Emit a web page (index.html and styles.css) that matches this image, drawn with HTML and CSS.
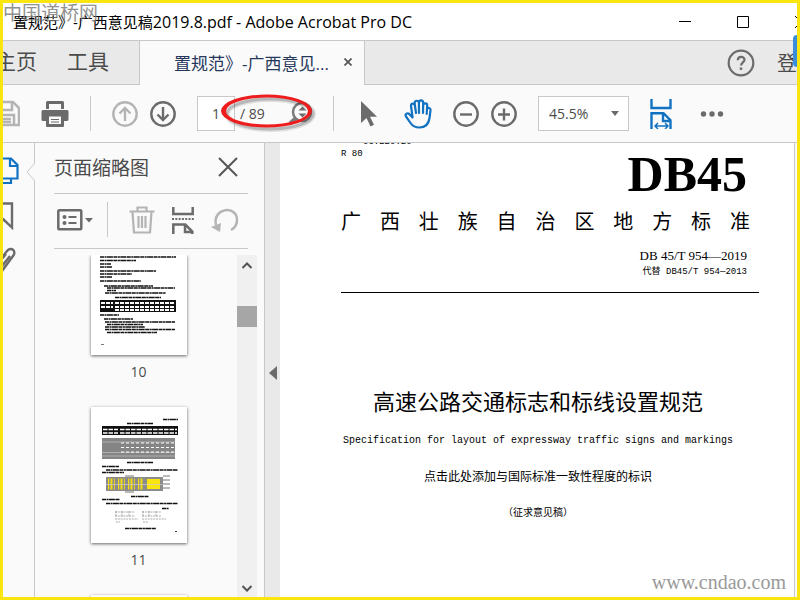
FILE: index.html
```
<!DOCTYPE html>
<html lang="zh-CN">
<head>
  <meta charset="UTF-8" />
  <meta name="viewport" content="width=device-width, initial-scale=1" />
  <title>Adobe Acrobat Pro DC</title>
  <link rel="stylesheet" href="styles.css">
</head>
<body>

  <header class="titlebar">
    <h1>置规范》-广西意见稿<span>2019.8.pdf - Adobe Acrobat Pro DC</span></h1>
    <div class="window-buttons">
      <button aria-label="Minimize"><svg width="12" height="12"><path d="M0 5.5h12" stroke="#000"/></svg></button>
      <button aria-label="Maximize"><svg width="12" height="12"><path d="M.5 .5h11v11h-11z" fill="none" stroke="#000"/></svg></button>
      <button aria-label="Close"><svg width="12" height="12"><path d="M0 0l12 12M12 0L0 12" stroke="#000"/></svg></button>
    </div>
  </header>
  <div class="site-mark">中国道桥网</div>

  <nav class="tabs">
    <div class="main-tabs">
      <a href="#home">主页</a>
      <a href="#tools">工具</a>
    </div>
    <div class="file-tab">
      <span>置规范》-广西意见...</span>
      <button aria-label="Close tab"><svg width="8" height="8"><path d="M.5 .5l7 7M7.500 .5l-7 7" stroke="#555" stroke-width="1.700"/></svg></button>
    </div>
    <div class="account">
      <button aria-label="Help">
        <svg width="28" height="28" fill="none" stroke="#6b6b6b" stroke-width="2.200"><circle cx="14" cy="14" r="12.300"/><path d="M10.800 11.200c0-4.400 6.700-4.200 6.700-.5 0 2.600-3.400 2.700-3.400 5.700" stroke-width="2.200"/><path d="M14 18.500v2.400" stroke-width="2.500"/></svg>
      </button>
      <a href="#login">登录</a>
    </div>
    <div class="side-flag"></div>
  </nav>

  <div class="toolbar">
    <div class="group file-tools">
      <button aria-label="Save">
        <svg width="28" height="28" fill="none" stroke="#b4b4b4" stroke-width="2.500"><path d="M2 2h19l6 6v17H2z"/><path d="M8 2v8h12V2M7 25V15h15v10M10 19h9M10 22h9"/></svg>
      </button>
      <button aria-label="Print">
        <svg width="28" height="28"><path d="M5 9V2.500Q5 1 6.500 1h15Q23 1 23 2.500V9h-3V4H8v5z" fill="#6b6b6b"/><path d="M2 10h24q1.500 0 1.500 1.500V19Q27.500 21 26 21h-3v5q0 1-1 1H6q-1 0-1-1v-5H2Q.5 21 .5 19.500v-8Q.5 10 2 10z" fill="#6b6b6b"/><path d="M8 16.500h12V24H8z" fill="#fafafa"/><path d="M10 19.500h8M10 22h8" stroke="#6b6b6b" stroke-width="1.200"/></svg>
      </button>
    </div>
    <div class="divider"></div>
    <div class="group">
      <button aria-label="Previous page">
        <svg width="26" height="26" fill="none" stroke="#b4b4b4" stroke-width="2.400"><circle cx="13" cy="13" r="11.700"/><path d="M13 20V7M7.500 12.500L13 7l5.500 5.500"/></svg>
      </button>
      <button aria-label="Next page">
        <svg width="26" height="26" fill="none" stroke="#6b6b6b" stroke-width="2.400"><circle cx="13" cy="13" r="11.700"/><path d="M13 6v13M7.500 13.500L13 19l5.500-5.500"/></svg>
      </button>
    </div>
    <div class="page-nav">
      <input type="text" id="page" value="1">
      <label for="page">/ 89</label>
      <button aria-label="Find">
        <svg width="24" height="28"><circle cx="14" cy="12" r="9" fill="none" stroke="#7b7b7b" stroke-width="2.500"/><path d="M8 18L2 23.500" stroke="#7b7b7b" stroke-width="4"/><path d="M10.500 10.500l4-4 4 4zM10.500 13.500l4 4 4-4z" fill="#6b6b6b"/></svg>
      </button>
      <svg class="red-ring" width="100" height="42">
        <ellipse cx="50" cy="22" rx="43" ry="15" fill="none" stroke="#000" stroke-opacity=".1" stroke-width="6"/>
        <ellipse cx="50" cy="22" rx="43" ry="15" fill="none" stroke="#000" stroke-opacity=".18" stroke-width="3"/>
        <path fill-rule="evenodd" d="M1 19a45.500 16.500 0 1 0 91 0a45.500 16.500 0 1 0-91 0zM6 19a41 13.500 0 1 0 82 0a41 13.500 0 1 0-82 0z" fill="#ee1c1c"/>
      </svg>
    </div>
    <div class="divider"></div>
    <div class="group wide">
      <button aria-label="Select">
        <svg width="28" height="28"><path d="M6 1v22l5.500-5 4 8.500 3.500-1.800-4-8H22z" fill="#6b6b6b"/></svg>
      </button>
      <button aria-label="Hand">
        <svg width="28" height="30" fill="none" stroke="#1272c2" stroke-width="2.200" stroke-linejoin="round" stroke-linecap="round"><path d="M8.500 18L7 7c-.3-3 3.500-3.500 4 0l1 7M11 7.500l-.3-3.500c0-3 4-3 4.200 0L15 14M14.900 4c0-3.500 4.300-3.500 4.300 0L19 14M19.200 6.500c.2-3 4.100-2.600 4 0L22.700 15M23 10.500c.8-2.500 3.800-1.800 3.500.8L25.500 19c-.8 6-4.500 9.500-10 9.500-4.500 0-7-1.500-9-4.500L2 17.500c-1.500-2.800 1.700-4.200 3.500-2.200l3 3.200"/></svg>
      </button>
    </div>
    <div class="group">
      <button aria-label="Zoom out">
        <svg width="26" height="26" fill="none" stroke="#6b6b6b" stroke-width="2.400"><circle cx="13" cy="13" r="11.700"/><path d="M7 13.500h12"/></svg>
      </button>
      <button aria-label="Zoom in">
        <svg width="26" height="26" fill="none" stroke="#6b6b6b" stroke-width="2.400"><circle cx="13" cy="13" r="11.700"/><path d="M7 13.500h12M13 7.500v12"/></svg>
      </button>
    </div>
    <div class="zoom-box">
      <select aria-label="Zoom level"><option>45.5%</option></select>
      <svg width="8" height="5"><path d="M0 0h8L4 5z" fill="#6b6b6b"/></svg>
    </div>
    <button aria-label="Fit width">
      <svg width="22" height="30" fill="none" stroke="#1272c2" stroke-width="2.400"><path d="M1.500 0v9h19V0M1.500 30V14.200h12l7 7V30M13 14.500v7.500h7"/><path d="M5.500 27h12M8 24l-3 3 3 3M15 24l3 3-3 3" stroke-width="1.500"/></svg>
    </button>
    <button class="more" aria-label="More tools">
      <svg width="24" height="6" fill="#6b6b6b"><circle cx="3.500" cy="3" r="2.700"/><circle cx="12" cy="3" r="2.700"/><circle cx="20.500" cy="3" r="2.700"/></svg>
    </button>
  </div>

  <main>
    <aside class="rail">
      <button aria-label="Page thumbnails">
        <svg width="26" height="28" fill="none" stroke="#1272c2" stroke-width="2.200"><path d="M5 1.500h13l6.500 6.500v13.500H5zM17 2v7h7M18 22v4H1V8h4"/></svg>
      </button>
      <button aria-label="Bookmarks">
        <svg width="26" height="28" fill="none" stroke="#6b6b6b" stroke-width="2.400"><path d="M2 1.500h17v24l-8.500-8-8.500 8z"/></svg>
      </button>
      <button aria-label="Attachments">
        <svg width="26" height="28" fill="none" stroke="#6b6b6b" stroke-width="2.400"><path d="M7 13l7-9c4-5 10 0 6 5L9 24c-3 4-9 0-6-5l10-12M9 19l8-10"/></svg>
      </button>
      <svg class="notch" width="9" height="20"><path d="M9 1L1 10l8 9" fill="#fafafa" stroke="#c8c8c8"/></svg>
    </aside>

    <section class="panel">
      <div class="panel-head">
        <h2>页面缩略图</h2>
        <button aria-label="Close panel"><svg width="20" height="20"><path d="M1 1l18 18M19 1L1 19" stroke="#555" stroke-width="2"/></svg></button>
      </div>
      <div class="panel-tools">
        <button aria-label="Options">
          <svg width="37" height="22"><rect x="1.300" y="1.300" width="23" height="19" rx="1" fill="none" stroke="#6b6b6b" stroke-width="2.500"/><circle cx="7.500" cy="8" r="2" fill="#6b6b6b"/><circle cx="7.500" cy="14" r="2" fill="#6b6b6b"/><path d="M11.500 8h8M11.500 14h8" stroke="#6b6b6b" stroke-width="2"/><path d="M28 9h8l-4 4.500z" fill="#6b6b6b"/></svg>
        </button>
        <div class="divider"></div>
        <button aria-label="Delete">
          <svg width="26" height="28" fill="none" stroke="#b4b4b4" stroke-width="2.200"><path d="M.5 5.500h25M8.500 5V1.500h9V5M3.500 6l1.500 20.500h16L22.500 6M9.500 10v12M13 10v12M16.500 10v12"/></svg>
        </button>
        <button aria-label="Extract pages">
          <svg width="22" height="28" fill="none" stroke="#6b6b6b" stroke-width="2.500"><path d="M1.300 1v7h19.400V1M1.300 28V18.500h12l7 7V28M13 18v8h8"/><path d="M0 13h22" stroke-width="2" stroke-dasharray="2 1.300"/></svg>
        </button>
        <button aria-label="Rotate">
          <svg width="28" height="26"><path d="M5 18C1 1 25-2 26 12c.2 5-2 9-6 11" fill="none" stroke="#b4b4b4" stroke-width="2.500"/><path d="M0 20l10-4-1 9z" fill="#b4b4b4"/></svg>
        </button>
      </div>

      <div class="thumbs">
        <div class="thumb-list">
          <figure>
            <svg class="sheet" width="96" height="100">
              <g fill="none" stroke="#111" stroke-width="1.500" stroke-dasharray="4 .5 2 .4 6 .5">
                <path d="M9 2h76M9 5.500h36M9 9h11M9 12h12M9 16h56M9 19h32M9 22h12M9 26h41M13 31h49M16 33h68M16 35.500h9M14 38h61M24 42.500h46M9 60h19M13 64h29M14 67h70M16 69.500h36M14 72h40M14 74.500h70M16 77.500h50"/>
              </g>
              <path d="M9 45h76v12H9z" fill="#111"/>
              <path d="M10 48h12M24 48h60M10 52h12M24 52h60M24 55h60" stroke="#fff" stroke-width="2" stroke-dasharray="4 1"/>
              <path d="M10 89.500h3" stroke="#777"/>
            </svg>
            <figcaption>10</figcaption>
          </figure>
          <figure>
            <svg class="sheet" width="96" height="136">
              <g fill="none" stroke="#111" stroke-width="1.500" stroke-dasharray="4 .5 2 .4 6 .5">
                <path d="M72 12.500h15M36 16.500h26M36 55.500h26M11 59.500h17M15 63h72M11 65.500h22M40 89.500h18M11 92.500h18M15 96.500h72M71 101.500h7M34 121.500h31"/>
              </g>
              <path d="M11 19h76v9H11z" fill="#111"/>
              <path d="M12 22.500h15M29 22.500h57M12 26h15M29 26h57" stroke="#fff" stroke-width="1.600" stroke-dasharray="4.500 1"/>
              <path d="M11 31h73v21H11z" fill="#858585"/>
              <path d="M11 35h73M11 45.500h73M11 49h73" stroke="#bbb" stroke-width=".8"/>
              <path d="M30 36h54M30 40.500h54M30 45h54" stroke="#fff" stroke-width="1.200" stroke-dasharray="3 2"/>
              <path d="M15 70h57v14H15z" fill="#8b8b8b"/>
              <path d="M17 77h35" stroke="#f5dd15" stroke-width="11" stroke-dasharray="1.200 1.300 2 1.700 .8 3"/>
              <path d="M56 72h13v10H56z" fill="#fae50e"/>
              <path d="M15 77.500h57" stroke="#ccc" stroke-width=".7"/>
              <path d="M34 69h9M72 69h7M72 73h7M72 77h7M72 81h7M34 85h9" stroke="#777" stroke-width="1.200"/>
              <path d="M24 105h20M24 109h20M24 112h23M51 105h19M51 109h19M51 112h24M25 104v6M31 104v6M38 104v6M52 104v6M58 104v6M65 104v6M25 115h4M52 115h5" fill="none" stroke="#888" stroke-width=".7" stroke-dasharray="2 .8"/>
              <path d="M84 124.500h2" stroke="#333"/>
            </svg>
            <figcaption>11</figcaption>
          </figure>
          <figure>
            <svg class="sheet" width="96" height="136"></svg>
          </figure>
        </div>
        <div class="scrollbar">
          <svg width="10" height="7"><path d="M.5 6L5 1.500 9.500 6" fill="none" stroke="#555" stroke-width="2"/></svg>
          <div class="handle"></div>
          <svg width="10" height="7"><path d="M.5 1L5 5.500 9.500 1" fill="none" stroke="#555" stroke-width="2"/></svg>
        </div>
      </div>
    </section>

    <button class="splitter" aria-label="Collapse panel">
      <svg width="8" height="14"><path d="M8 0v14L0 7z" fill="#6b6b6b"/></svg>
    </button>

    <article class="document">
      <div class="codes">
        <p class="ics">03.220.20</p>
        <p>R 80</p>
      </div>
      <p class="standard-mark">DB45</p>
      <p class="region">广 西 壮 族 自 治 区 地 方 标 准</p>
      <p class="number">DB 45/T 954—2019</p>
      <p class="replaces">代替 DB45/T 954—2013</p>
      <hr>
      <div class="cover">
        <h2>高速公路交通标志和标线设置规范</h2>
        <p class="english">Specification for layout of expressway traffic signs and markings</p>
        <p class="conformity">点击此处添加与国际标准一致性程度的标识</p>
        <p class="draft">（征求意见稿）</p>
      </div>
      <div class="url-mark">www.cndao.com</div>
    </article>
  </main>

</body>
</html>
```
FILE: styles.css
```
* {
  box-sizing: border-box;
  margin: 0;
  padding: 0;
}

body {
  display: flex;
  flex-direction: column;
  height: 100vh;
  border: 3px solid #fae50e;
  background: #fafafa;
  color: #4b4b4b;
  font-family: "Open Sans", "Noto Sans CJK SC", sans-serif;
  font-size: 14px;
  overflow: hidden;
  position: relative;
}

button {
  display: flex;
  align-items: center;
  justify-content: center;
  flex-shrink: 0;
  border: none;
  background: none;
}

a {
  color: inherit;
  text-decoration: none;
}

svg {
  display: block;
  flex-shrink: 0;
}

/* Title bar */
.titlebar {
  display: flex;
  align-items: center;
  justify-content: space-between;
  flex: 0 0 38px;
  padding-left: 10px;
  background: white;
  border-bottom: 1px solid #c8c8c8;
  overflow: hidden;
}

.titlebar h1 {
  color: #000;
  font-size: 15px;
  font-weight: normal;
  line-height: 20px;
  white-space: nowrap;
}

.titlebar h1 span {
  font-size: 16px;
}

.window-buttons {
  display: flex;
  gap: 46px;
  margin-right: -10px;
}

.site-mark {
  position: absolute;
  top: 0;
  left: 0;
  color: #777;
  font-size: 19px;
  line-height: 20px;
  opacity: 0.8;
}

/* Tabs */
.tabs {
  display: flex;
  flex: 0 0 44px;
  background: #e9e9e9;
  position: relative;
}

.main-tabs {
  display: flex;
  align-items: center;
  justify-content: flex-end;
  gap: 30px;
  width: 137px;
  padding: 0 30px 4px 0;
  border-right: 1px solid #c8c8c8;
  border-bottom: 1px solid #c8c8c8;
  font-size: 21px;
  line-height: 28px;
  white-space: nowrap;
  overflow: hidden;
}

.file-tab {
  display: flex;
  align-items: center;
  justify-content: space-between;
  width: 225px;
  padding: 0 12px 2px 34px;
  border-right: 1px solid #c8c8c8;
  background: #fafafa;
  color: #26375c;
  font-size: 17px;
  white-space: nowrap;
}

.account {
  display: flex;
  align-items: center;
  justify-content: flex-end;
  flex: 1;
  gap: 22px;
  border-bottom: 1px solid #c8c8c8;
  font-size: 20px;
  white-space: nowrap;
  overflow: hidden;
}

.account a {
  width: 20px;
}

.side-flag {
  position: absolute;
  top: -6px;
  right: 0;
  width: 4px;
  height: 32px;
  background: #3a8ddb;
  border-radius: 4px 0 0 4px;
}

/* Toolbar */
.toolbar {
  display: flex;
  align-items: center;
  flex: 0 0 58px;
  gap: 21px;
  border-bottom: 1px solid #c8c8c8;
}

.group {
  display: flex;
  align-items: center;
  gap: 12px;
}

.group.wide {
  gap: 21px;
}

.file-tools {
  gap: 21px;
  margin-left: -11px;
}

.divider {
  width: 1px;
  height: 35px;
  background: #c8c8c8;
}

.page-nav {
  display: flex;
  align-items: center;
  position: relative;
}

.page-nav input {
  width: 38px;
  height: 35px;
  border: 1px solid #c8c8c8;
  background: white;
  color: #4b4b4b;
  font: inherit;
  text-align: center;
}

.page-nav label {
  width: 53px;
  padding-left: 5px;
}

.red-ring {
  position: absolute;
  top: -4px;
  left: 23px;
}

.zoom-box {
  display: flex;
  align-items: center;
  position: relative;
}

.zoom-box select {
  appearance: none;
  width: 91px;
  height: 35px;
  padding-left: 10px;
  border: 1px solid #c8c8c8;
  background: white;
  color: #4b4b4b;
  font: inherit;
}

.zoom-box svg {
  position: absolute;
  right: 10px;
  pointer-events: none;
}

.more {
  margin-left: 7px;
}

/* Work area */
main {
  display: flex;
  flex: 1;
  min-height: 0;
}

.rail {
  display: flex;
  flex-direction: column;
  align-items: flex-start;
  flex: 0 0 32px;
  gap: 17px;
  padding-top: 14px;
  border-right: 1px solid #c8c8c8;
  position: relative;
}

.rail button {
  margin-left: -10px;
}

.notch {
  position: absolute;
  top: 19px;
  right: -1px;
}

.panel {
  display: flex;
  flex-direction: column;
  flex: 0 0 230px;
  padding-left: 19px;
  border-right: 1px solid #c8c8c8;
}

.panel-head {
  display: flex;
  align-items: center;
  justify-content: space-between;
  flex: 0 0 51px;
  margin-right: 16px;
  padding: 0 10px 3px 0;
  border-bottom: 1px solid #c8c8c8;
}

.panel-head h2 {
  font-size: 19px;
  font-weight: normal;
}

.panel-tools {
  display: flex;
  align-items: center;
  flex: 0 0 55px;
  gap: 17px;
  margin-right: 16px;
  padding: 0 0 3px 3px;
  border-bottom: 1px solid #c8c8c8;
}

.panel-tools .divider {
  margin: 0 4px 0 -4px;
}

.thumbs {
  display: flex;
  flex: 1;
  min-height: 0;
  padding-top: 6px;
}

.thumb-list {
  display: flex;
  flex-direction: column;
  align-items: center;
  flex: 1;
  padding-right: 14px;
  overflow: hidden;
}

.sheet {
  background: white;
  box-shadow: 0 1px 3px rgba(0, 0, 0, 0.6);
}

figcaption {
  padding: 5px 0 23px;
  font-size: 14px;
  line-height: 24px;
  text-align: center;
}

.scrollbar {
  display: flex;
  flex-direction: column;
  align-items: center;
  width: 20px;
  margin-right: 7px;
  padding: 7px 0 5px;
  background: #f0f0f0;
}

.handle {
  width: 100%;
  height: 21px;
  margin: 37px 0 auto;
  background: #a6a6a6;
}

.splitter {
  flex: 0 0 15px;
  padding-top: 5px;
  background: #e9e9e9;
}

/* Document */
.document {
  flex: 1;
  min-width: 0;
  margin-right: 2px;
  padding: 0 35px 0 61px;
  border-right: 1px solid #c8c8c8;
  background: white;
  color: #000;
  position: relative;
  overflow: hidden;
}

.codes {
  margin-top: -7px;
  font-family: "Liberation Mono", monospace;
  font-size: 9px;
  line-height: 12px;
}

.codes .ics {
  padding-left: 22px;
}

.standard-mark {
  padding-right: 12px;
  font-family: "Liberation Serif", serif;
  font-size: 50px;
  font-weight: bold;
  line-height: 28px;
  text-align: right;
}

.region {
  margin: 20px 9px 0 0;
  font-size: 20px;
  line-height: 28px;
  text-align-last: justify;
}

.number,
.replaces {
  padding-right: 12px;
  text-align: right;
}

.number {
  margin-top: 12px;
  font-family: "Liberation Serif", serif;
  font-size: 13px;
  line-height: 16px;
}

.replaces {
  font-family: "Liberation Mono", "Noto Sans CJK SC", monospace;
  font-size: 9px;
  line-height: 16px;
}

.document hr {
  margin-top: 12px;
  border: none;
  border-top: 1px solid #000;
}

.cover {
  padding: 92px 24px 0 0;
  text-align: center;
  white-space: nowrap;
}

.cover h2 {
  font-size: 22px;
  font-weight: normal;
  line-height: 32px;
}

.english {
  margin-top: 16px;
  font-family: "Liberation Mono", monospace;
  font-size: 10px;
  line-height: 16px;
}

.conformity {
  margin-top: 20px;
  font-size: 12px;
  line-height: 16px;
}

.draft {
  margin-top: 19px;
  font-size: 10px;
  line-height: 16px;
}

.url-mark {
  position: absolute;
  right: 8px;
  bottom: 3px;
  color: #999;
  font-family: "Liberation Serif", serif;
  font-size: 20px;
  line-height: 24px;
}
```
